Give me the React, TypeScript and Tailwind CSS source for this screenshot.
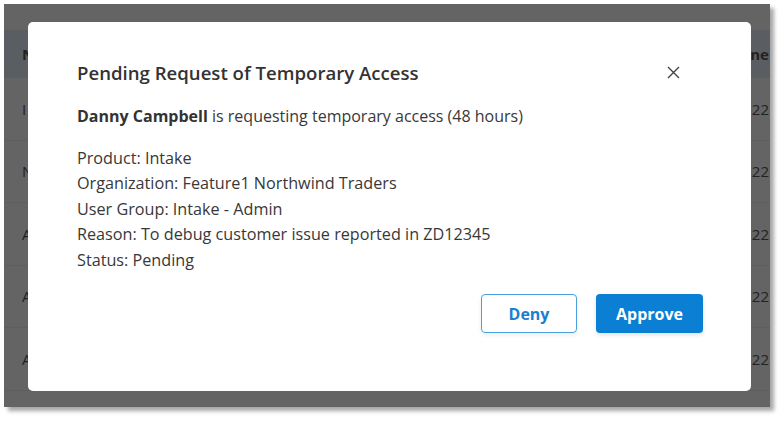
// App.tsx
// Temporary-access approval dialog over a dimmed table, framed like a screenshot.

const ROWS = ["I", "N", "A", "A", "A"];

const DETAILS = [
  "Product: Intake",
  "Organization: Feature1 Northwind Traders",
  "User Group: Intake - Admin",
  "Reason: To debug customer issue reported in ZD12345",
  "Status: Pending",
];

export default function App() {
  return (
    <div className="w-[783px] h-[421px] bg-white pl-[4px] pt-[4px] font-['Open_Sans',sans-serif]">
      {/* dimmed page behind the modal */}
      <div className="relative w-[766px] h-[403px] bg-[#646464] shadow-[4px_4px_4px_rgba(0,0,0,0.35)] overflow-hidden">
        <div className="flex flex-col pt-[26px]">
          <div className="h-[48px] bg-[#5a5e62] flex items-center justify-between pl-[18px] pr-[1px] text-[15px] font-bold text-[#222]">
            <span>N</span>
            <span>ne</span>
          </div>
          {ROWS.map((r, i) => (
            <div
              key={i}
              className="h-[62.5px] border-b border-[#5e5e5e] flex items-center justify-between pl-[18px] pr-[1px] text-[15px] text-[#222]"
            >
              <span>{r}</span>
              <span>22</span>
            </div>
          ))}
        </div>

        {/* modal */}
        <div className="absolute left-[24px] top-[18px] w-[723px] h-[369px] bg-white rounded-[5px] flex flex-col pl-[49px] pr-[48px] pt-[37px] text-[#383838]">
          <div className="flex items-center justify-between">
            <h2 className="text-[18.6px] font-semibold text-[#333]">Pending Request of Temporary Access</h2>
            <button aria-label="Close" className="w-[24px] h-[24px] flex items-center justify-center mr-[18px]">
              <svg width="13" height="13" viewBox="0 0 13 13" fill="none" stroke="#444" strokeWidth="1.4">
                <path d="M1 1L12 12M12 1L1 12" />
              </svg>
            </button>
          </div>

          <p className="mt-[17px] text-[16px]">
            <span className="font-bold text-[#333]">Danny Campbell</span> is requesting temporary access (48 hours)
          </p>

          <div className="mt-[18px] flex flex-col text-[16.2px] leading-[25.5px]">
            {DETAILS.map((d) => (
              <span key={d}>{d}</span>
            ))}
          </div>

          <div className="mt-[21px] flex justify-end gap-[19px]">
            <button className="w-[96px] h-[39px] rounded-[4px] border border-[#4aa0de] text-[#1b7fcf] text-[16px] font-bold shadow-[0_2px_4px_rgba(0,0,0,0.08)]">
              Deny
            </button>
            <button className="w-[107px] h-[39px] rounded-[4px] bg-[#0a7fd3] text-white text-[16px] font-bold shadow-[0_2px_4px_rgba(0,0,0,0.12)]">
              Approve
            </button>
          </div>
        </div>
      </div>
    </div>
  );
}
